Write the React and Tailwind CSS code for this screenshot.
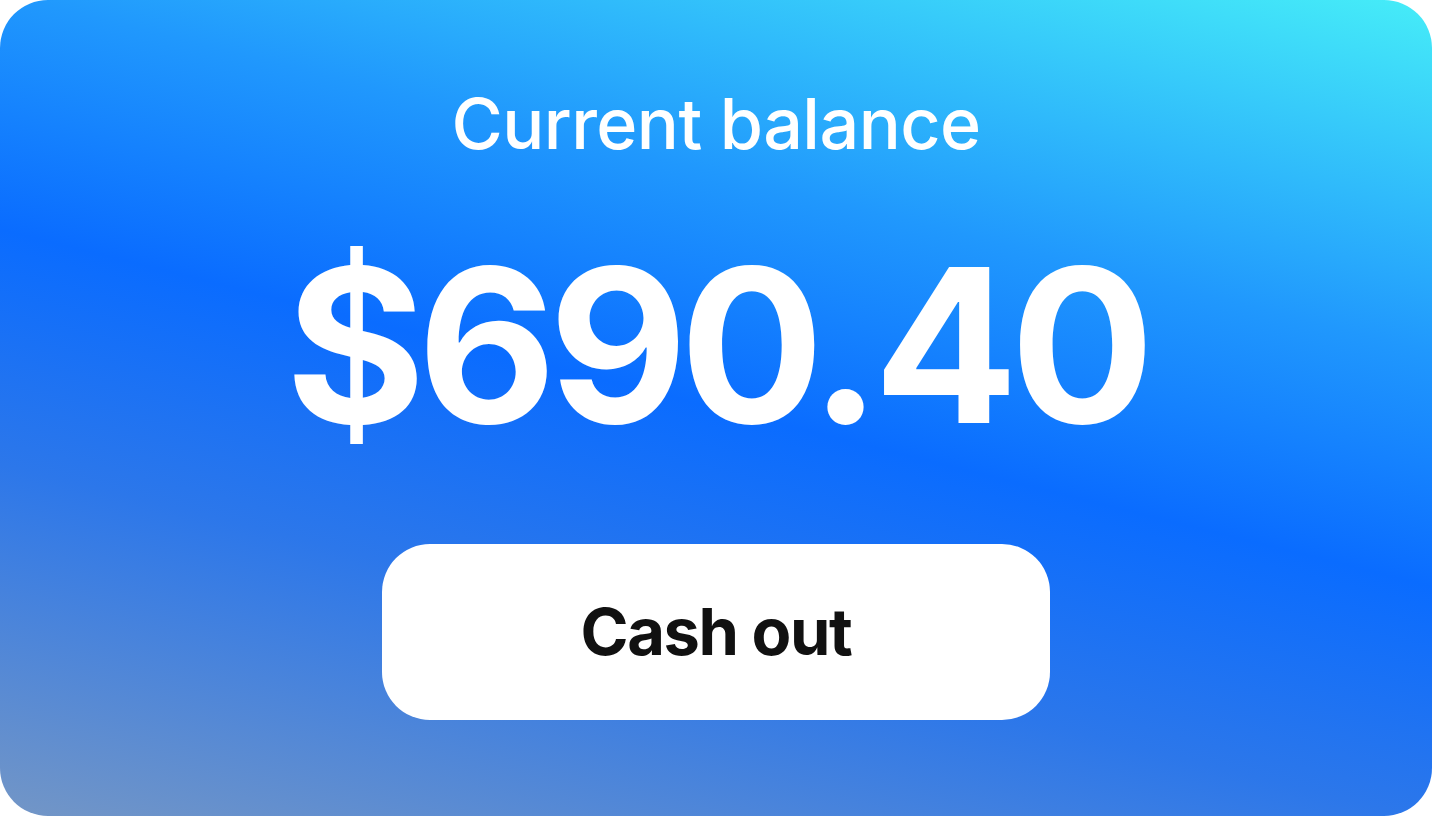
export default function App() {
  return (
    <div className="w-[1432px] h-[816px] bg-white">
      <div className="h-full w-full rounded-[48px] bg-[linear-gradient(14deg,#7396c6_0%,#2c77ea_30%,#0a6cff_50%,#2098fd_70%,#46edf8_100%)] flex flex-col items-center pt-[89px] font-['Inter',sans-serif] text-white">
        <h2 className="text-[70px] leading-none font-medium tracking-[-0.008em]">Current balance</h2>
        <div className="mt-[80px] text-[214px] leading-none font-bold tracking-[-0.037em]">$690.40</div>
        <button className="mt-[91px] w-[668px] h-[176px] rounded-[48px] bg-white text-[#111111] text-[65px] font-bold tracking-[-0.022em]">
          Cash out
        </button>
      </div>
    </div>
  );
}
